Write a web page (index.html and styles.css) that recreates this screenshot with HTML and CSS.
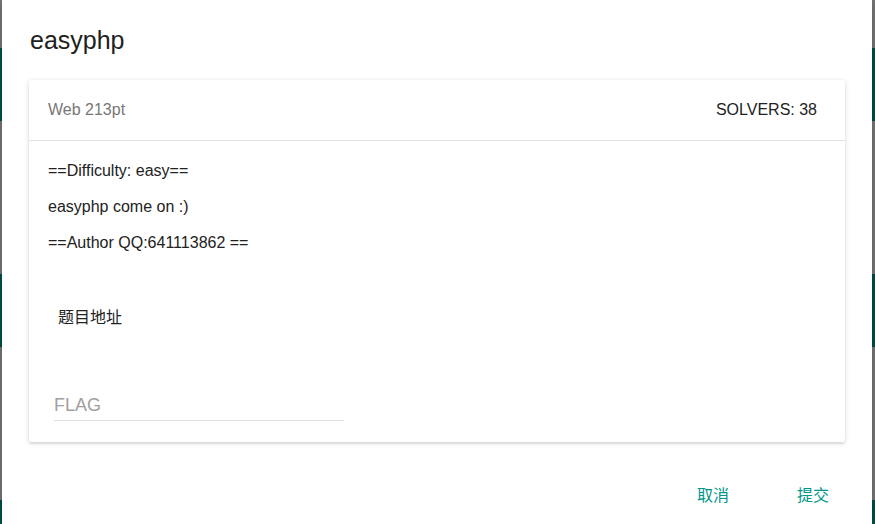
FILE: index.html
```html
<!DOCTYPE html>
<html lang="zh">
<head>
<meta charset="utf-8">
<title>easyphp</title>
<link rel="stylesheet" href="styles.css">
</head>
<body>
<div class="backdrop">
  <div class="stripe grey s1"></div>
  <div class="stripe teal s2"></div>
  <div class="stripe grey s3"></div>
  <div class="stripe teal s4"></div>
  <div class="stripe grey s5"></div>
  <div class="stripe teal s6"></div>
</div>
<div class="dialog">
  <h2 class="title">easyphp</h2>
  <div class="card">
    <div class="card-header">
      <span class="category">Web 213pt</span>
      <span class="solvers">SOLVERS: 38</span>
    </div>
    <div class="card-body">
      <p class="line">==Difficulty: easy==</p>
      <p class="line">easyphp come on :)</p>
      <p class="line">==Author QQ:641113862 ==</p>
      <div class="link-row"><a class="link">题目地址</a></div>
      <input class="flag" type="text" placeholder="FLAG">
    </div>
  </div>
  <div class="actions">
    <button class="btn">取消</button>
    <button class="btn">提交</button>
  </div>
</div>
</body>
</html>
```

FILE: styles.css
```css
html, body {
  margin: 0;
  padding: 0;
  height: 100%;
  overflow: hidden;
}

body {
  font-family: "Liberation Sans", Arial, "Noto Sans CJK SC", sans-serif;
  color: #222;
}

.backdrop {
  display: flex;
  flex-direction: column;
  height: 100%;
  overflow: hidden;
}

.stripe { flex: none; }
.grey { background: #7b7b7b; }
.teal { background: #00514a; }
.s1 { height: 48px; }
.s2 { height: 73px; }
.s3 { height: 153px; }
.s4 { height: 73px; }
.s5 { height: 153px; }
.s6 { height: 24px; }

.dialog {
  position: absolute;
  top: 0;
  left: 2px;
  width: 870px;
  height: 524px;
  overflow: hidden;
  background: #fff;
  box-sizing: border-box;
  padding: 24px 27px 0 27px;
  box-shadow: 0 0 12px rgba(0,0,0,0.3);
}

.title {
  margin: 0;
  font-size: 25px;
  line-height: 32px;
  font-weight: normal;
  color: #212121;
  padding-left: 1px;
}

.card {
  margin-top: 24px;
  background: #fff;
  border-radius: 2px;
  box-shadow: 0 1px 5px rgba(0,0,0,0.16), 0 2px 2px rgba(0,0,0,0.06);
}

.card-header {
  height: 60px;
  display: flex;
  align-items: center;
  justify-content: space-between;
  padding: 0 28px 0 19px;
  border-bottom: 1px solid #e3e3e3;
  font-size: 16px;
}

.category { color: #777; }
.solvers { color: #222; }

.card-body {
  padding: 18px 19px 21px 19px;
}

.line {
  margin: 0 0 12px 0;
  font-size: 16px;
  line-height: 24px;
  color: #222;
}

.link-row {
  margin-top: 51px;
  padding-left: 10px;
  font-size: 16px;
  line-height: 24px;
  font-family: "Liberation Sans", "Noto Sans CJK SC", sans-serif;
}

.link {
  color: #222;
  text-decoration: none;
}

.flag {
  display: block;
  margin: 63px 0 0 6px;
  width: 290px;
  height: 24px;
  padding: 0 0 3px 0;
  border: none;
  border-bottom: 1px solid #dedede;
  outline: none;
  font-family: "Liberation Sans", Arial, sans-serif;
  font-size: 18px;
  line-height: 24px;
  color: #222;
  background: transparent;
}

.flag::placeholder { color: #a0a0a0; }

.actions {
  margin-top: 34px;
  display: flex;
  justify-content: flex-end;
  gap: 32px;
  margin-right: -2px;
}

.btn {
  height: 36px;
  padding: 0 18px;
  border: none;
  background: transparent;
  font-family: "Noto Sans CJK SC", sans-serif;
  font-size: 16px;
  line-height: 36px;
  color: #009688;
  cursor: pointer;
}
```
